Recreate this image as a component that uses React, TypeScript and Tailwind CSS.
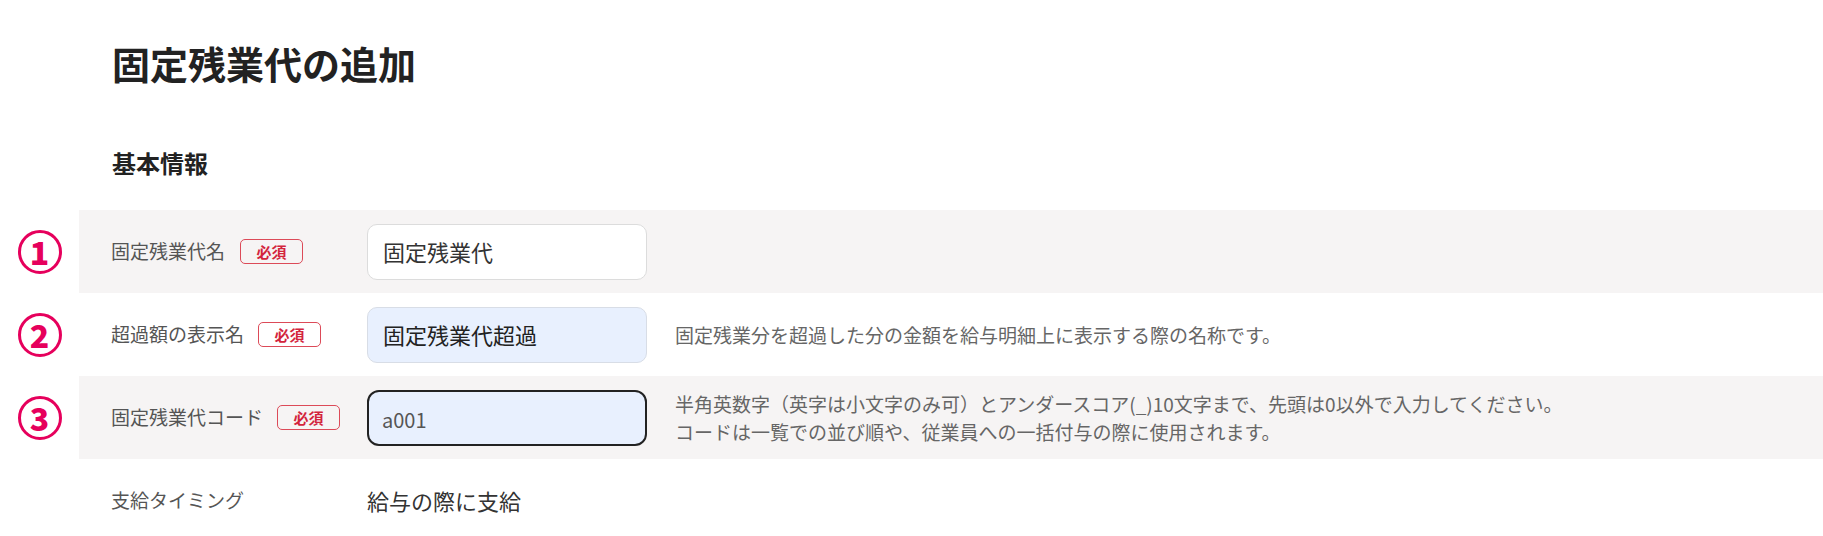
const font = { fontFamily: '"Noto Sans CJK JP", "Noto Sans", sans-serif' };

function Circle({ n }: { n: string }) {
  return (
    <div className="w-[79px] shrink-0 flex items-center justify-center">
      <span className="w-[44px] h-[44px] rounded-full border-[3px] border-[#e6005c] text-[#e6005c] flex items-center justify-center text-[32px] font-black leading-none pb-[2px]">
        {n}
      </span>
    </div>
  );
}

function Required() {
  return (
    <span className="inline-flex items-center justify-center h-[25px] w-[63px] border-[1.5px] border-[#dc4a58] rounded-[5px] text-[15px] font-bold text-[#d3243c] leading-none">
      必須
    </span>
  );
}

interface RowProps {
  num?: string;
  label: string;
  labelGap: string;
  shaded?: boolean;
  children: React.ReactNode;
  note?: React.ReactNode;
  required?: boolean;
}

function Row({ num, label, labelGap, shaded, children, note, required }: RowProps) {
  return (
    <div className="flex h-[83px]">
      {num ? <Circle n={num} /> : <div className="w-[79px] shrink-0" />}
      <div className={`flex-1 flex items-center pl-[32px] ${shaded ? "bg-[#f6f4f4]" : "bg-white"}`}>
        <div className="w-[256px] shrink-0 flex items-center">
          <span className="text-[19px] text-[#555]">{label}</span>
          {required && <span className={labelGap}><Required /></span>}
        </div>
        {children}
        {note && <div className="ml-[28px] text-[19px] leading-[28px] text-[#666]">{note}</div>}
      </div>
    </div>
  );
}

export default function App() {
  return (
    <div className="min-h-screen bg-white text-[#333]" style={font}>
      <div className="pl-[112px] pt-[40px]">
        <h1 className="text-[38px] font-bold leading-[46px] text-[#222]">固定残業代の追加</h1>
        <h2 className="mt-[61px] text-[24px] font-bold leading-[32px] text-[#222]">基本情報</h2>
      </div>

      <div className="mt-[31px]">
        <Row num="1" label="固定残業代名" labelGap="ml-[15px]" shaded required>
          <div className="w-[280px] h-[56px] shrink-0 rounded-[10px] border border-[#dcdcdc] bg-white flex items-center pl-[15px] text-[22px] text-[#333]">
            固定残業代
          </div>
        </Row>

        <Row
          num="2"
          label="超過額の表示名"
          labelGap="ml-[14px]"
          required
          note="固定残業分を超過した分の金額を給与明細上に表示する際の名称です。"
        >
          <div className="w-[280px] h-[56px] shrink-0 rounded-[10px] border border-[#d8dde6] bg-[#e8f0fe] flex items-center pl-[15px] text-[22px] text-[#222]">
            固定残業代超過
          </div>
        </Row>

        <Row
          num="3"
          label="固定残業代コード"
          labelGap="ml-[14px]"
          shaded
          required
          note={
            <>
              <div>半角英数字（英字は小文字のみ可）とアンダースコア(_)10文字まで、先頭は0以外で入力してください。</div>
              <div>コードは一覧での並び順や、従業員への一括付与の際に使用されます。</div>
            </>
          }
        >
          <div className="w-[280px] h-[56px] shrink-0 rounded-[12px] border-[2.5px] border-[#222] bg-[#e8f0fe] flex items-center pl-[13px] pt-[4px] text-[20px] text-[#555]">
            a001
          </div>
        </Row>

        <Row label="支給タイミング" labelGap="">
          <span className="text-[22px] text-[#333]">給与の際に支給</span>
        </Row>
      </div>
    </div>
  );
}
